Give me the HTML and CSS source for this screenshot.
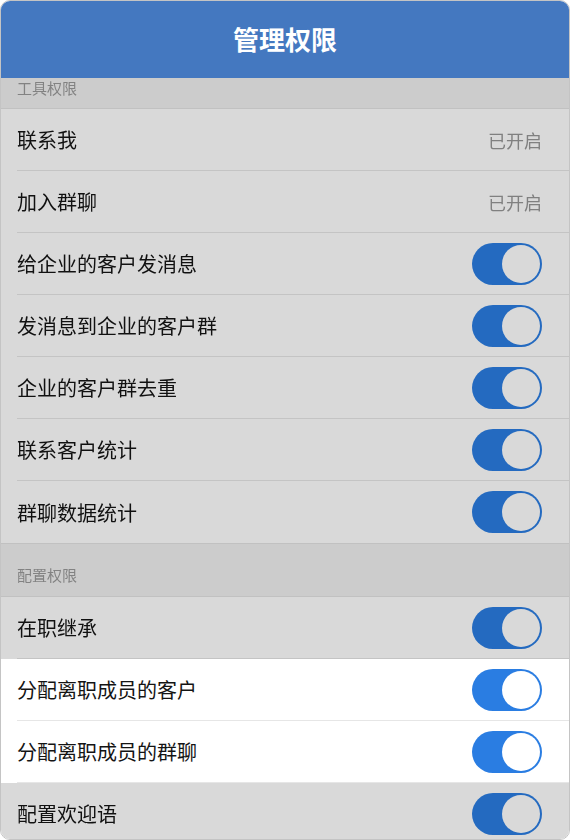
FILE: index.html
```html
<!DOCTYPE html>
<html lang="zh-CN">
<head>
  <meta charset="UTF-8">
  <meta name="viewport" content="width=device-width, initial-scale=1.0">
  <title>管理权限</title>
  <link rel="stylesheet" href="styles.css">
</head>
<body>

<div class="frame">
  <div class="header">管理权限</div>

  <div class="list">
    <div class="section dim scrolled">工具权限</div>

    <div class="row dim"><div class="row-inner"><span class="label">联系我</span><span class="value">已开启</span></div></div>
    <div class="row dim"><div class="row-inner"><span class="label">加入群聊</span><span class="value">已开启</span></div></div>
    <div class="row dim"><div class="row-inner"><span class="label">给企业的客户发消息</span><span class="switch on"></span></div></div>
    <div class="row dim"><div class="row-inner"><span class="label">发消息到企业的客户群</span><span class="switch on"></span></div></div>
    <div class="row dim"><div class="row-inner"><span class="label">企业的客户群去重</span><span class="switch on"></span></div></div>
    <div class="row dim"><div class="row-inner"><span class="label">联系客户统计</span><span class="switch on"></span></div></div>
    <div class="row dim last"><div class="row-inner"><span class="label">群聊数据统计</span><span class="switch on"></span></div></div>

    <div class="section dim">配置权限</div>

    <div class="row dim"><div class="row-inner"><span class="label">在职继承</span><span class="switch on"></span></div></div>
    <div class="row"><div class="row-inner"><span class="label">分配离职成员的客户</span><span class="switch on"></span></div></div>
    <div class="row"><div class="row-inner"><span class="label">分配离职成员的群聊</span><span class="switch on"></span></div></div>
    <div class="row dim"><div class="row-inner"><span class="label">配置欢迎语</span><span class="switch on"></span></div></div>
  </div>
</div>

</body>
</html>
```

FILE: styles.css
```css
body {
  margin: 0;
  font-family: "Noto Sans CJK SC", "Noto Sans", sans-serif;
  background-color: #fff;
}
.frame {
  height: 840px;
  box-sizing: border-box;
  border: 1px solid #c4c4c4;
  border-radius: 10px;
  overflow: hidden;
  display: flex;
  flex-direction: column;
}
.header {
  height: 77px;
  flex-shrink: 0;
  background-color: #4478c0;
  color: #fff;
  font-size: 26px;
  font-weight: bold;
  display: flex;
  align-items: center;
  justify-content: center;
  padding-bottom: 2px;
  box-sizing: border-box;
}
.list {
  flex: 1;
  overflow: hidden;
}
.dim {
  filter: brightness(0.85);
}
.section {
  height: 54px;
  box-sizing: border-box;
  padding: 22px 16px 0;
  background-color: #f0f0f0;
  border-top: 1px solid #e3e3e3;
  border-bottom: 1px solid #e3e3e3;
  color: #999;
  font-size: 15px;
  line-height: 18px;
}
/* first section sits half under the header (list is scrolled) */
.section.scrolled {
  height: 31px;
  padding-top: 1px;
  border-top: none;
}
.row {
  padding-left: 16px;
  background-color: #fff;
}
.row-inner {
  height: 62px;
  box-sizing: border-box;
  padding-right: 27px;
  border-bottom: 1px solid #e6e6e6;
  display: flex;
  align-items: center;
  justify-content: space-between;
}
.row.last .row-inner {
  border-bottom: none;
}
.label {
  font-size: 20px;
  color: #141414;
}
.value {
  font-size: 18px;
  color: #979797;
}
.switch {
  position: relative;
  width: 70px;
  height: 42px;
  border-radius: 21px;
  background-color: #d8d8d8;
}
.switch.on {
  background-color: #2a7de2;
}
.switch::after {
  content: "";
  position: absolute;
  top: 2px;
  left: 2px;
  width: 38px;
  height: 38px;
  border-radius: 50%;
  background-color: #fff;
}
.switch.on::after {
  left: 30px;
}
```
